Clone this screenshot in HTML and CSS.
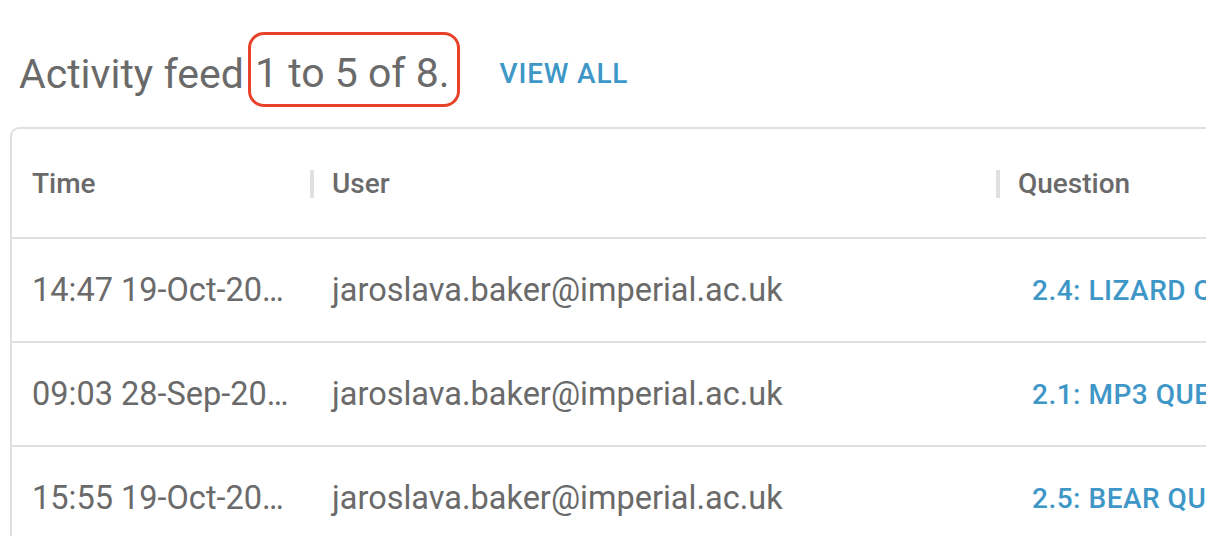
FILE: index.html
```html
<!DOCTYPE html>
<html lang="en">
<head>
<meta charset="utf-8">
<title>Activity feed</title>
<link rel="stylesheet" href="styles.css">
</head>
<body>
<div class="page">
  <div class="feed-head">
    <h1 class="feed-title">Activity feed <span class="count">1 to 5 of 8.</span></h1>
    <a class="view-all" href="#">VIEW ALL</a>
  </div>
  <div class="grid">
    <div class="grid-row grid-header">
      <div class="cell hcell sep">Time</div>
      <div class="cell hcell sep">User</div>
      <div class="cell hcell">Question</div>
    </div>
    <div class="grid-row">
      <div class="cell"><span class="trunc">14:47 19-Oct-2021</span></div>
      <div class="cell">jaroslava.baker@imperial.ac.uk</div>
      <div class="cell"><a class="qlink" href="#">2.4: LIZARD QUESTION</a></div>
    </div>
    <div class="grid-row">
      <div class="cell"><span class="trunc">09:03 28-Sep-2021</span></div>
      <div class="cell">jaroslava.baker@imperial.ac.uk</div>
      <div class="cell"><a class="qlink" href="#">2.1: MP3 QUESTION</a></div>
    </div>
    <div class="grid-row">
      <div class="cell"><span class="trunc">15:55 19-Oct-2021</span></div>
      <div class="cell">jaroslava.baker@imperial.ac.uk</div>
      <div class="cell"><a class="qlink" href="#">2.5: BEAR QUESTION</a></div>
    </div>
  </div>
</div>
</body>
</html>
```
FILE: styles.css
```css
html, body {
  margin: 0;
  padding: 0;
  background: #ffffff;
  overflow: hidden;
}
body {
  font-family: Roboto, "Liberation Sans", sans-serif;
  color: #6a6a6a;
}
.page {
  width: 1206px;
  height: 536px;
  overflow: hidden;
}
.feed-head {
  display: flex;
  align-items: center;
  height: 76px;
  margin-top: 31px;
  padding-left: 19px;
}
.feed-title {
  margin: 0;
  font-size: 41px;
  font-weight: 400;
  line-height: 48px;
  color: #6a6a6a;
  white-space: nowrap;
}
.count {
  display: inline-block;
  border: 3.5px solid #e8432a;
  border-radius: 16px;
  padding: 14.5px 7px 6.5px 4px;
  margin-left: -6px;
  line-height: 48px;
}
.view-all {
  margin-left: 24px;
  margin-top: 8px;
  padding: 12px 16px;
  font-size: 28px;
  font-weight: 500;
  letter-spacing: 0.8px;
  color: #3e97c7;
  text-decoration: none;
}
.grid {
  margin-top: 20px;
  margin-left: 10px;
  width: 1400px;
  border: 2px solid #e0e0e0;
  border-radius: 9px;
  height: 500px;
}
.grid-row {
  display: grid;
  grid-template-columns: 300px 686px 1fr;
  height: 102px;
  border-bottom: 2px solid #e0e0e0;
  font-size: 32.5px;
}
.grid-header {
  height: 108px;
  font-size: 28px;
  font-weight: 500;
}
.cell {
  display: flex;
  align-items: center;
  padding: 0 20px;
  position: relative;
  min-width: 0;
  white-space: nowrap;
}
.hcell.sep::after {
  content: "";
  position: absolute;
  right: -2px;
  top: 50%;
  width: 4px;
  height: 28px;
  margin-top: -13px;
  background: #e0e0e0;
}
.trunc {
  display: block;
  overflow: hidden;
  text-overflow: ellipsis;
  white-space: nowrap;
  width: 100%;
}
.qlink {
  padding: 12px 14px;
  font-size: 28px;
  color: #3e97c7;
  font-weight: 500;
  letter-spacing: 0.5px;
  text-decoration: none;
}
```
